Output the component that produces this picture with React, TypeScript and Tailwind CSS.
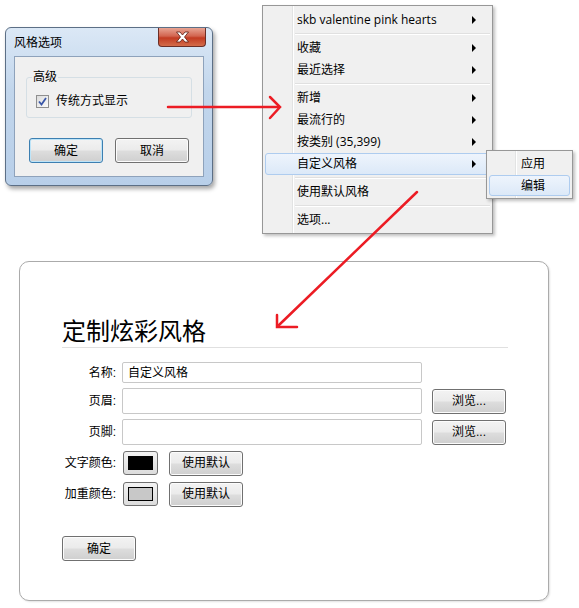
const ui = { fontFamily: '"Liberation Sans", "Noto Sans CJK SC", sans-serif' };
const menuFont = { fontFamily: '"Open Sans", "Noto Sans CJK SC", sans-serif' };

function WinButton({ label, w, h, primary }: { label: string; w: string; h: string; primary?: boolean }) {
  return (
    <div
      className={`${w} ${h} flex items-center justify-center rounded-[3px] border text-[12px] text-black bg-[linear-gradient(#f3f3f3_0%,#ebebeb_48%,#dddddd_52%,#cfcfcf_100%)] ${
        primary ? 'border-[#3c7fb1] shadow-[inset_0_0_0_1px_#bde4f8]' : 'border-[#707070] shadow-[inset_0_0_0_1px_#fcfcfc]'
      }`}
    >
      {label}
    </div>
  );
}

function CloseGlyph() {
  return (
    <svg width="15" height="12" viewBox="0 0 15 12">
      <path
        d="M1.5 1 H5 L7.5 4 L10 1 H13.5 L9.5 6 L13.5 11 H10 L7.5 8 L5 11 H1.5 L5.5 6 Z"
        fill="#ffffff"
        stroke="#5a1a10"
        strokeWidth="0.8"
        strokeLinejoin="round"
      />
    </svg>
  );
}

function OptionsDialog() {
  return (
    <div className="absolute left-[5px] top-[27px] w-[208px] h-[159px] rounded-[6px] border border-[#5c6f86] bg-[linear-gradient(#dbe8f6,#c2d6ec_40%,#b8cfe9)] shadow-[2px_3px_4px_rgba(0,0,0,0.35)] flex flex-col">
      <div className="h-[28px] flex items-start justify-between pl-[8px]">
        <span className="mt-[6px] text-[12px] text-black">风格选项</span>
        <div className="mr-[6px] w-[48px] h-[19px] rounded-b-[4px] border border-t-0 border-[#6b2e26] bg-[linear-gradient(#e8a493,#d2644f_45%,#c23b22_55%,#d36c4a)] flex items-center justify-center">
          <CloseGlyph />
        </div>
      </div>
      <div className="mx-[8px] flex-1 mb-[8px] border border-[#8ea2bb] bg-[#f0f0f0] px-[11px] pt-[20px]">
        <div className="relative h-[41px] rounded-[3px] border border-[#d5dfe5]">
          <span className="absolute -top-[9px] left-[5px] bg-[#f0f0f0] px-[1px] text-[12px] leading-[16px]">高级</span>
          <div className="flex items-center gap-[7px] pl-[9px] pt-[14px]">
            <div className="w-[13px] h-[13px] border border-[#8f8f8f] bg-[linear-gradient(135deg,#dcdcdc,#fbfbfb)] flex items-center justify-center">
              <svg width="9" height="9" viewBox="0 0 9 9">
                <path d="M1 4.5 L3.5 7.5 L8 1" fill="none" stroke="#3a57a8" strokeWidth="1.8" />
              </svg>
            </div>
            <span className="text-[12px]">传统方式显示</span>
          </div>
        </div>
        <div className="mt-[20px] flex gap-[12px] pl-[3px]">
          <WinButton label="确定" w="w-[74px]" h="h-[25px]" primary />
          <WinButton label="取消" w="w-[74px]" h="h-[25px]" />
        </div>
      </div>
    </div>
  );
}

function Arrow() {
  return (
    <svg width="6" height="8" viewBox="0 0 6 8">
      <path d="M1 0 L5 4 L1 8 Z" fill="#000" />
    </svg>
  );
}

function MenuItem({ label, sub, active }: { label: string; sub?: boolean; active?: boolean }) {
  return (
    <div
      className={`h-[22px] mx-[2px] flex items-center pl-[31px] pr-[12px] rounded-[3px] border ${
        active ? 'border-[#aeccef] bg-[linear-gradient(#eef4fc,#dce9f8)]' : 'border-transparent'
      }`}
    >
      <span className="flex-1 text-[12px] text-black whitespace-nowrap">{label}</span>
      {sub && <Arrow />}
    </div>
  );
}

function Sep() {
  return (
    <div className="h-[6px] flex items-center pl-[32px] pr-[2px]">
      <div className="w-full h-[2px] border-t border-[#e0e0e0] border-b border-b-white" />
    </div>
  );
}

function StyleMenu() {
  return (
    <div
      className="absolute left-[262px] top-[5px] w-[231px] h-[229px] border border-[#979797] bg-[#f0f0f0] shadow-[2px_2px_3px_rgba(0,0,0,0.25)] py-[3px]"
      style={menuFont}
    >
      <div className="absolute left-[29px] top-0 bottom-0 w-[2px] border-l border-[#e2e3e3] border-r border-r-white" />
      <div className="relative flex flex-col">
        <MenuItem label="skb valentine pink hearts" sub />
        <Sep />
        <MenuItem label="收藏" sub />
        <MenuItem label="最近选择" sub />
        <Sep />
        <MenuItem label="新增" sub />
        <MenuItem label="最流行的" sub />
        <MenuItem label="按类别 (35,399)" sub />
        <MenuItem label="自定义风格" sub active />
        <Sep />
        <MenuItem label="使用默认风格" />
        <Sep />
        <MenuItem label="选项..." />
      </div>
    </div>
  );
}

function SubMenu() {
  return (
    <div className="absolute left-[486px] top-[150px] w-[87px] h-[49px] border border-[#979797] bg-[#f0f0f0] shadow-[2px_2px_3px_rgba(0,0,0,0.25)] py-[2px]">
      <div className="absolute left-[28px] top-0 bottom-0 w-[2px] border-l border-[#e2e3e3] border-r border-r-white" />
      <div className="relative flex flex-col">
        <div className="h-[22px] mx-[2px] flex items-center pl-[31px] border border-transparent text-[12px]">应用</div>
        <div className="h-[21px] mx-[2px] flex items-center pl-[31px] rounded-[3px] border border-[#aeccef] bg-[linear-gradient(#eef4fc,#dce9f8)] text-[12px]">
          编辑
        </div>
      </div>
    </div>
  );
}

function FieldLabel({ text }: { text: string }) {
  return <span className="w-[54px] text-right text-[12px] text-black shrink-0">{text}</span>;
}

function Swatch({ color }: { color: string }) {
  return (
    <div className="w-[35px] h-[24px] rounded-[3px] border border-[#707070] bg-[linear-gradient(#f3f3f3,#dcdcdc)] flex items-center justify-center">
      <div className={`w-[25px] h-[14px] border border-black ${color}`} />
    </div>
  );
}

function CustomStylePanel() {
  return (
    <div className="absolute left-[19px] top-[261px] w-[530px] h-[340px] rounded-[10px] border border-[#ababab] bg-white shadow-[1px_1px_2px_rgba(0,0,0,0.12)] pl-[42px] pr-[40px] pt-[56px]">
      <h1 className="text-[24px] leading-[28px] text-black font-normal">定制炫彩风格</h1>
      <div className="mt-[1px] h-px bg-[#e0e0e0]" />
      <div className="mt-[14px] flex flex-col">
        <div className="flex items-center gap-[6px] h-[21px]">
          <FieldLabel text="名称:" />
          <div className="w-[300px] h-[21px] border border-[#c8c8c8] rounded-[2px] flex items-center px-[5px] text-[12px]">自定义风格</div>
        </div>
        <div className="mt-[5px] flex items-center gap-[6px] h-[26px]">
          <FieldLabel text="页眉:" />
          <div className="w-[300px] h-[26px] border border-[#c8c8c8] rounded-[2px]" />
          <div className="ml-[4px]">
            <WinButton label="浏览..." w="w-[74px]" h="h-[25px]" />
          </div>
        </div>
        <div className="mt-[5px] flex items-center gap-[6px] h-[26px]">
          <FieldLabel text="页脚:" />
          <div className="w-[300px] h-[26px] border border-[#c8c8c8] rounded-[2px]" />
          <div className="ml-[4px]">
            <WinButton label="浏览..." w="w-[74px]" h="h-[25px]" />
          </div>
        </div>
        <div className="mt-[6px] flex items-center gap-[7px] h-[24px]">
          <FieldLabel text="文字颜色:" />
          <Swatch color="bg-black" />
          <div className="ml-[4px]">
            <WinButton label="使用默认" w="w-[74px]" h="h-[25px]" />
          </div>
        </div>
        <div className="mt-[7px] flex items-center gap-[7px] h-[24px]">
          <FieldLabel text="加重颜色:" />
          <Swatch color="bg-[#c8c8c8]" />
          <div className="ml-[4px]">
            <WinButton label="使用默认" w="w-[74px]" h="h-[25px]" />
          </div>
        </div>
        <div className="mt-[30px]">
          <WinButton label="确定" w="w-[74px]" h="h-[25px]" />
        </div>
      </div>
    </div>
  );
}

export default function App() {
  return (
    <div className="relative w-[579px] h-[608px] bg-white overflow-hidden text-black" style={ui}>
      <OptionsDialog />
      <StyleMenu />
      <SubMenu />
      <CustomStylePanel />
      {/* red callout arrows */}
      <svg className="absolute inset-0 pointer-events-none" width="579" height="608" viewBox="0 0 579 608">
        <g stroke="#ec1c24" strokeWidth="2.5" fill="none" strokeLinecap="round">
          <path d="M168 107 L279 107" />
          <path d="M270 97 L280 107 L270 118" />
          <path d="M417 192 L279 325" />
          <path d="M277 315 L277 327 L297 327" />
        </g>
      </svg>
    </div>
  );
}
